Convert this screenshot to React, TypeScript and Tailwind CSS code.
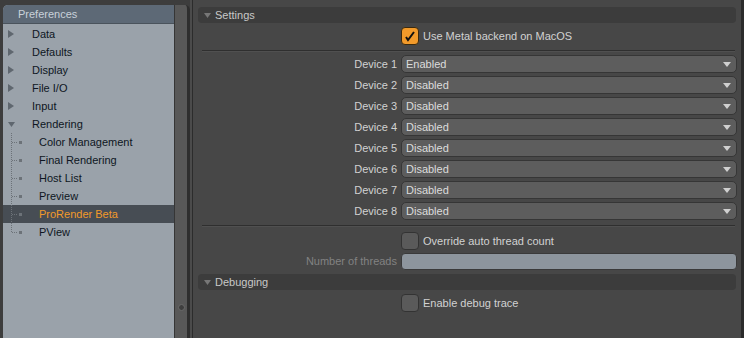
import React from "react";

const font = { fontFamily: '"Liberation Sans", Arial, sans-serif' };

const topItems = ["Data", "Defaults", "Display", "File I/O", "Input"];
const children = ["Color Management", "Final Rendering", "Host List", "Preview", "ProRender Beta", "PView"];
const devices = ["Enabled", "Disabled", "Disabled", "Disabled", "Disabled", "Disabled", "Disabled", "Disabled"];

function TriRight() {
  return (
    <svg width="6" height="8" viewBox="0 0 6 8" className="shrink-0">
      <path d="M0 0 L6 4 L0 8 Z" fill="#5f676f" />
    </svg>
  );
}

function TriDown({ color = "#5f676f", size = 7 }: { color?: string; size?: number }) {
  return (
    <svg width={size} height={size - 2} viewBox="0 0 7 5" className="shrink-0">
      <path d="M0 0 L7 0 L3.5 5 Z" fill={color} />
    </svg>
  );
}

function TreeGlyph({ last }: { last: boolean }) {
  return (
    <svg width="24" height="18" viewBox="0 0 24 18" className="shrink-0">
      <line x1="8.5" y1="0" x2="8.5" y2={last ? 9 : 18} stroke="#6c7278" strokeDasharray="1 1" />
      <line x1="9" y1="9.5" x2="15" y2="9.5" stroke="#6c7278" strokeDasharray="1 1" />
      <rect x="16" y="8" width="3" height="3" fill="#6c7278" />
    </svg>
  );
}

function Checkbox({ checked }: { checked?: boolean }) {
  return (
    <div
      className={`w-[18px] h-[18px] rounded-[4px] border shrink-0 flex items-center justify-center ${
        checked ? "bg-[#f29a2a] border-[#3a2a10]" : "bg-[#5a5a5a] border-[#333333]"
      }`}
    >
      {checked && (
        <svg width="12" height="12" viewBox="0 0 12 12">
          <path d="M2 7 L4 10 L10 2" fill="none" stroke="#111" strokeWidth="2" />
        </svg>
      )}
    </div>
  );
}

function SectionHeader({ label }: { label: string }) {
  return (
    <div className="mx-[5px] h-[16px] rounded-[4px] bg-[#3c3c3c] flex items-center gap-[4px] pl-[6px] text-[11px] text-[#c8c8c8]">
      <TriDown color="#777777" />
      <span>{label}</span>
    </div>
  );
}

function Row({ label, children, dim }: { label?: string; children: React.ReactNode; dim?: boolean }) {
  return (
    <div className="flex items-center">
      <div className={`w-[208px] pr-[4px] text-right text-[11px] ${dim ? "text-[#828282]" : "text-[#d2d2d2]"}`}>
        {label}
      </div>
      <div className="w-[336px] flex items-center">{children}</div>
    </div>
  );
}

function Dropdown({ value }: { value: string }) {
  return (
    <div className="w-[336px] h-[18px] rounded-[5px] bg-[#5d5d5d] border border-[#363636] flex items-center justify-between pl-[4px] pr-[5px] text-[11px] text-[#dcdcdc]">
      <span>{value}</span>
      <svg width="8" height="5" viewBox="0 0 8 5">
        <path d="M0 0 L8 0 L4 5 Z" fill="#d0d0d0" />
      </svg>
    </div>
  );
}

function Separator() {
  return <div className="ml-[9px] mr-[6px] h-[2px] border-t border-[#2f2f2f] border-b-[#505050] border-b" />;
}

export default function App() {
  return (
    <div className="w-[744px] h-[338px] flex bg-[#3f3f3f] overflow-hidden" style={font}>
      {/* left frame */}
      <div className="flex flex-col w-[190px] pt-[5px] pl-[3px] bg-[#3d3d3d]">
        <div className="flex flex-1 rounded-t-[5px] overflow-hidden border-r-[3px] border-[#2e2e2e]">
          <div className="w-[171px] flex flex-col bg-[#9aa2aa]">
            <div className="h-[19px] bg-[#5d6976] border-b border-[#4a535c] flex items-center pl-[15px] text-[11px] text-[#c9d1da]">
              Preferences
            </div>
            <div className="flex flex-col pt-[1px] text-[11px] text-[#0e1622]">
              {topItems.map((t) => (
                <div key={t} className="h-[18px] flex items-center pl-[5px]">
                  <TriRight />
                  <span className="ml-[18px]">{t}</span>
                </div>
              ))}
              <div className="h-[18px] flex items-center pl-[5px]">
                <TriDown />
                <span className="ml-[17px]">Rendering</span>
              </div>
              {children.map((c, i) => (
                <div
                  key={c}
                  className={`h-[18px] flex items-center ${c === "ProRender Beta" ? "bg-[#474d54] text-[#f29a2a]" : ""}`}
                >
                  <TreeGlyph last={i === children.length - 1} />
                  <span className="ml-[12px]">{c}</span>
                </div>
              ))}
            </div>
          </div>
          <div className="w-[13px] bg-[#585858] border-l border-[#363636] flex flex-col justify-end items-center pb-[27px]">
            <div className="w-[7px] h-[7px] rounded-full bg-[#3e3e3e] border border-[#6a6a6a]" />
          </div>
        </div>
      </div>
      <div className="w-[3px] bg-[#4b4b4b] border-r border-[#2c2c2c]" />
      {/* right panel */}
      <div className="flex-1 flex flex-col bg-[#474747] pt-[7px] border-r-[3px] border-[#2b2b2b]">
        <SectionHeader label="Settings" />
        <div className="mt-[4px] h-[18px]">
          <Row>
            <div className="flex items-center gap-[4px] text-[11px] text-[#d2d2d2]">
              <Checkbox checked />
              <span>Use Metal backend on MacOS</span>
            </div>
          </Row>
        </div>
        <div className="mt-[5px]">
          <Separator />
        </div>
        <div className="mt-[3px] flex flex-col gap-[3px]">
          {devices.map((d, i) => (
            <Row key={i} label={`Device ${i + 1}`}>
              <Dropdown value={d} />
            </Row>
          ))}
        </div>
        <div className="mt-[5px]">
          <Separator />
        </div>
        <div className="mt-[5px] h-[18px]">
          <Row>
            <div className="flex items-center gap-[4px] text-[11px] text-[#d2d2d2]">
              <Checkbox />
              <span>Override auto thread count</span>
            </div>
          </Row>
        </div>
        <div className="mt-[3px]">
          <Row label="Number of threads" dim>
            <div className="w-[336px] h-[17px] rounded-[4px] bg-[#8d959d] border border-[#3a3a3a]" />
          </Row>
        </div>
        <div className="mt-[4px]">
          <SectionHeader label="Debugging" />
        </div>
        <div className="mt-[4px] h-[18px]">
          <Row>
            <div className="flex items-center gap-[4px] text-[11px] text-[#d2d2d2]">
              <Checkbox />
              <span>Enable debug trace</span>
            </div>
          </Row>
        </div>
      </div>
    </div>
  );
}
